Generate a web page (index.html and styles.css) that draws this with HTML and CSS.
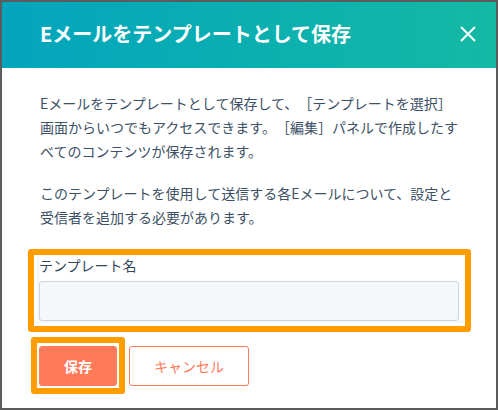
FILE: index.html
```html
<!DOCTYPE html>
<html lang="ja">
<head>
    <meta charset="UTF-8">
    <meta name="viewport" content="width=device-width, initial-scale=1.0">
    <title>Eメールをテンプレートとして保存</title>
    <link rel="stylesheet" href="styles.css">
</head>
<body>
    <div class="modal">
        <div class="modal-header">
            <h1>Eメールをテンプレートとして保存</h1>
            <button class="close" aria-label="閉じる">
                <svg width="16" height="16" viewBox="0 0 16 16">
                    <path d="M1 1 L15 15 M15 1 L1 15" stroke="#fff" stroke-width="2" fill="none"/>
                </svg>
            </button>
        </div>
        <div class="modal-body">
            <p>Eメールをテンプレートとして保存して、［テンプレートを選択］<br>画面からいつでもアクセスできます。［編集］パネルで作成したす<br>べてのコンテンツが保存されます。</p>
            <p>このテンプレートを使用して送信する各Eメールについて、設定と<br>受信者を追加する必要があります。</p>

            <div class="highlight field-box">
                <label for="templateName">テンプレート名</label>
                <input type="text" id="templateName">
            </div>

            <div class="actions">
                <div class="highlight btn-box">
                    <button class="btn btn-primary">保存</button>
                </div>
                <button class="btn btn-secondary">キャンセル</button>
            </div>
        </div>
    </div>
</body>
</html>
```

FILE: styles.css
```css
* {
    box-sizing: border-box;
}
body {
    margin: 0;
    font-family: "Noto Sans CJK JP", "Noto Sans", sans-serif;
    color: #33475b;
    text-spacing-trim: space-all;
}
.modal {
    width: 498px;
    height: 410px;
    border: 2px solid #5c5c5c;
    background: #fff;
    overflow: hidden;
}
.modal-header {
    height: 66px;
    display: flex;
    align-items: center;
    justify-content: space-between;
    padding: 0 18px 3px 38px;
    background: linear-gradient(to right, #02a5bd, #14b9a4);
}
.modal-header h1 {
    margin: 0;
    font-size: 20px;
    font-weight: bold;
    color: #fff;
    line-height: 24px;
}
.close {
    border: 0;
    background: none;
    padding: 0;
    width: 20px;
    height: 20px;
    display: flex;
    align-items: center;
    justify-content: center;
}
.modal-body {
    padding: 23px 38px 0 38px;
}
.modal-body p {
    margin: 0 0 18px;
    font-size: 14px;
    line-height: 24px;
    white-space: nowrap;
    color: #3d5166;
}
.highlight {
    border: 6px solid #ff9c00;
    border-radius: 3px;
}
.field-box {
    margin: 20px -13px 0 -12px;
    padding: 0 6px 5px 5px;
}
.field-box label {
    display: block;
    font-size: 14px;
    line-height: 20px;
    margin-bottom: 6px;
}
.field-box input {
    display: block;
    width: 100%;
    height: 40px;
    background: #f5f8fa;
    border: 1px solid #cbd6e2;
    border-radius: 3px;
}
.actions {
    display: flex;
    align-items: center;
    gap: 4px;
    margin: 5px 0 0 -9px;
}
.btn-box {
    padding: 3px 2px 2px 2px;
}
.btn {
    height: 40px;
    font-family: inherit;
    font-size: 14px;
    border-radius: 3px;
    padding: 0;
}
.btn-primary {
    width: 78px;
    background: #ff7a59;
    border: 1px solid #ff7a59;
    color: #fff;
    font-weight: bold;
}
.btn-secondary {
    width: 120px;
    background: #fff;
    border: 1px solid #ff7a59;
    color: #ff7a59;
}
```
